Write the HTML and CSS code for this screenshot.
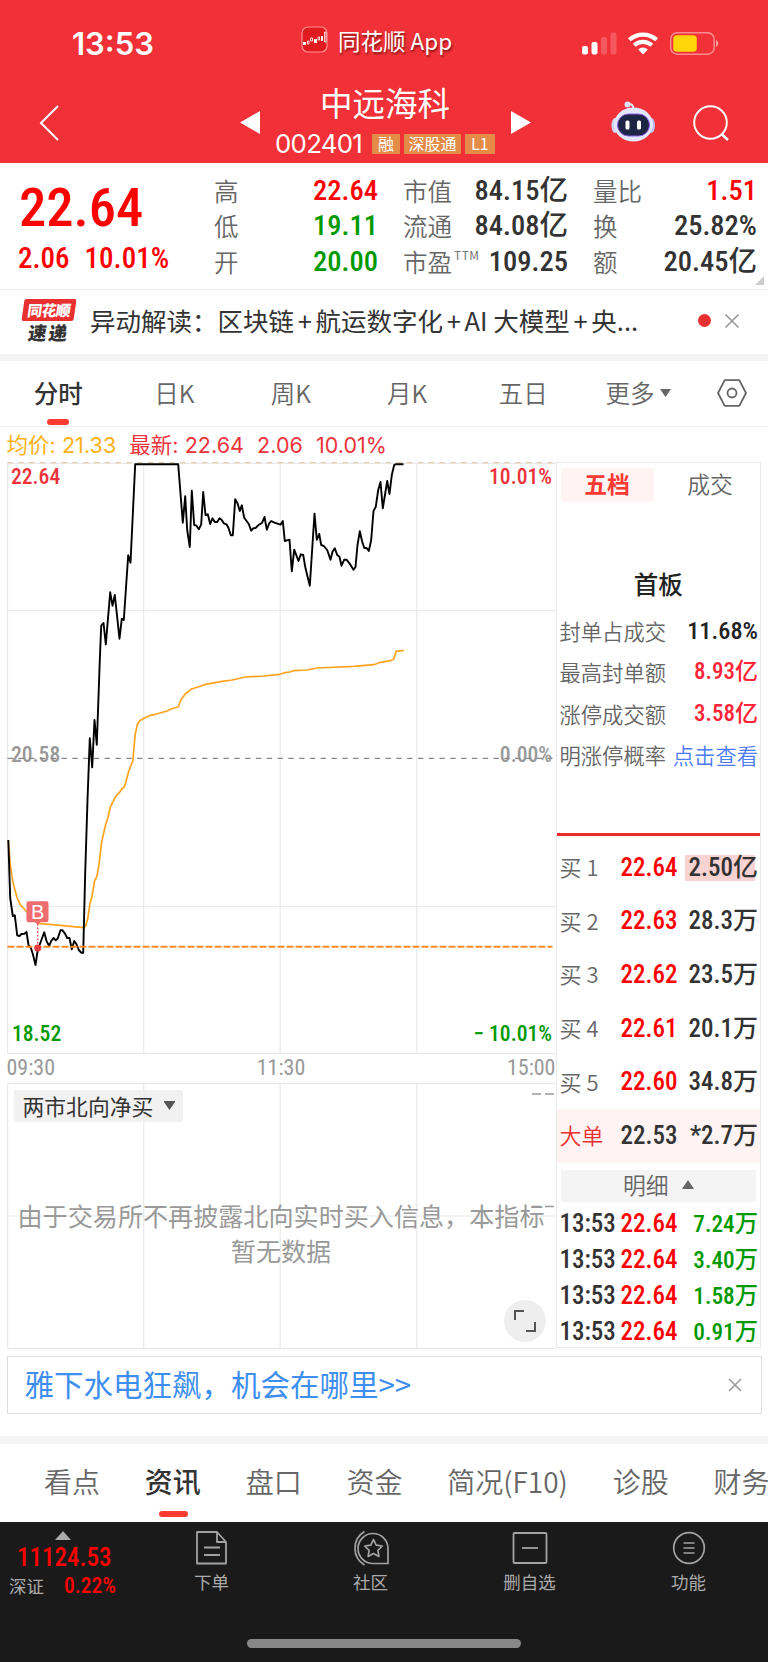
FILE: index.html
```html
<!DOCTYPE html>
<html lang="zh-CN">
  <head>
    <meta charset="UTF-8" />
    <meta name="viewport" content="width=device-width, initial-scale=1.0" />
    <title>中远海科 002401</title>
    <link rel="stylesheet" href="styles.css">
  </head>
  <body>
    <header class="header">
      <div class="status">
        <span class="clock">13:53</span>
        <div class="app-name">
          <svg class="app-icon" width="28" height="28" viewBox="0 0 28 28">
            <rect x="1" y="1" width="25" height="25" rx="6" fill="#e01c20" stroke="#ff8f8f" stroke-width="1.2" />
            <path d="M2 16h3v3H2zM13 13h3v4h-3zM20 10h2v5h-2z" fill="#fff" />
            <path d="M6.500 15h1.500v3h-1.500zM9.500 12h2v3h-2zM17 11h1.500v3H17zM23.500 6h1.500v10h-1.500z" fill="none" stroke="#fff" stroke-width=".8" />
          </svg>
          <span>同花顺 App</span>
        </div>
        <svg class="status-icons" width="138" height="26" viewBox="0 0 138 26">
          <g fill="#fff">
            <rect x="1" y="16" width="6" height="8.500" rx="2" />
            <rect x="10.500" y="12" width="6" height="12.500" rx="2" />
            <rect x="20" y="7" width="6" height="17.500" rx="2" opacity=".2" />
            <rect x="29.500" y="2.500" width="6" height="22" rx="2" opacity=".2" />
          </g>
          <g fill="none" stroke="#fff" stroke-width="4.200">
            <path d="M48.300 9.800a20.500 20.500 0 0 1 27.400 0" />
            <path d="M53.200 15.300a13 13 0 0 1 17.600 0" />
          </g>
          <path d="M62 24.500l-4.800-5a7 7 0 0 1 9.600 0z" fill="#fff" />
          <rect x="89.700" y="2.700" width="43.500" height="21.500" rx="6.500" fill="none" stroke="#fff" stroke-opacity=".45" stroke-width="1.500" />
          <rect x="92.300" y="5.300" width="23.500" height="16.400" rx="3.500" fill="#ffd60a" />
          <path d="M135 10c3 .8 3 6 0 7z" fill="#fff" fill-opacity=".5" />
        </svg>
      </div>
      <div class="nav">
        <svg class="back" width="22" height="38" viewBox="0 0 22 38">
          <path d="M20 2L3 19l17 17" fill="none" stroke="#fff" stroke-width="2" />
        </svg>
        <svg class="prev" width="20" height="23" viewBox="0 0 20 23"><path d="M20 0v23L0 11.500z" fill="#fff" /></svg>
        <div class="stock">
          <h1>中远海科</h1>
          <div class="code">
            <span class="code-num">002401</span>
            <span class="tag">融</span>
            <span class="tag">深股通</span>
            <span class="tag">L1</span>
          </div>
        </div>
        <svg class="next" width="20" height="23" viewBox="0 0 20 23"><path d="M0 0v23l20-11.500z" fill="#fff" /></svg>
        <svg class="robot" width="44" height="42" viewBox="0 0 44 42">
          <path d="M22.500 8c0-3-1-5-5-5.500" fill="none" stroke="#e6e9fa" stroke-width="2" />
          <circle cx="16.500" cy="3.500" r="3" fill="#dfe3f8" />
          <ellipse cx="4" cy="24.500" rx="3.500" ry="7.500" fill="#cfd5f5" />
          <ellipse cx="40.500" cy="24.500" rx="3.500" ry="7.500" fill="#b9bcf0" />
          <ellipse cx="22.500" cy="23.500" rx="19.500" ry="17" fill="#e3e7fb" />
          <rect x="6.500" y="13" width="32" height="22" rx="11" fill="#1d2544" stroke="#8d5bea" stroke-width="1" />
          <rect x="14.500" y="19.500" width="4" height="9" rx="1.500" fill="#fff" />
          <rect x="26" y="19.500" width="4" height="9" rx="1.500" fill="#fff" />
        </svg>
        <svg class="search" width="38" height="38" viewBox="0 0 38 38">
          <g fill="none" stroke="#fff" stroke-width="2">
            <circle cx="18.500" cy="18.500" r="16.300" />
            <path d="M29.500 30l6.500 6" stroke-width="2.500" />
          </g>
        </svg>
      </div>
    </header>

    <section class="quote">
      <div class="price">
        <div class="last din">22.64</div>
        <div class="change din"><span>2.06</span><span>10.01%</span></div>
      </div>
      <dl class="stats stats-a">
        <dt>高</dt><dd class="up">22.64</dd>
        <dt>低</dt><dd class="down">19.11</dd>
        <dt>开</dt><dd class="down">20.00</dd>
      </dl>
      <dl class="stats stats-b">
        <dt>市值</dt><dd>84.15亿</dd>
        <dt>流通</dt><dd>84.08亿</dd>
        <dt>市盈<sup>TTM</sup></dt><dd>109.25</dd>
      </dl>
      <dl class="stats stats-c">
        <dt>量比</dt><dd class="up">1.51</dd>
        <dt>换</dt><dd>25.82%</dd>
        <dt>额</dt><dd>20.45亿</dd>
      </dl>
      <svg class="corner" width="9" height="9" viewBox="0 0 9 9"><path d="M9 0v9H0z" fill="#ccc" /></svg>
    </section>

    <section class="news">
      <div class="news-logo">
        <span class="news-brand">同花顺</span>
        <span class="news-word">速递</span>
      </div>
      <p class="news-text">异动解读：区块链<i>+</i>航运数字化<i>+</i>AI 大模型<i>+</i>央...</p>
      <span class="dot"></span>
      <svg class="close" width="16" height="16" viewBox="0 0 16 16"><path d="M1.500 1.500l13 13M14.500 1.500l-13 13" stroke="#999" stroke-width="1.600" /></svg>
    </section>

    <nav class="periods">
      <a class="period active">分时</a>
      <a class="period">日K</a>
      <a class="period">周K</a>
      <a class="period">月K</a>
      <a class="period">五日</a>
      <a class="more">更多<svg width="11" height="8" viewBox="0 0 11 8"><path d="M0 0h11L5.500 8z" fill="#666" /></svg></a>
      <svg class="setting" width="32" height="28" viewBox="0 0 32 28">
        <g fill="none" stroke="#666" stroke-width="1.800">
          <path d="M8.700 1.200h14.600L30 14l-6.700 12.800H8.700L2 14z" stroke-linejoin="round" />
          <circle cx="16" cy="14" r="4.500" />
        </g>
      </svg>
    </nav>

    <main class="board">
      <div class="charts">
        <p class="legend"><span class="avg">均价: 21.33</span><span>最新: 22.64</span><span>2.06</span><span>10.01%</span></p>
        <svg class="minute" width="549" height="592" viewBox="6.500 462 549 592">
          <g fill="none" stroke="#e9e9e9" stroke-width="1.200">
            <path d="M7 463.400H555.500M7 610.500H555M7 906.500H555M7 1053.400H555" />
            <path d="M7 463V1054M143.200 463V1054M279.700 463V1054M416.300 463V1054" />
          </g>
          <path d="M7 462.600H552" stroke="#e2cdae" stroke-width="1.200" stroke-dasharray="5.400 5.400" />
          <g class="axis din">
            <text class="t-mid" x="10.500" y="762">20.58</text>
            <text class="t-mid" x="551.500" y="762" text-anchor="end">0.00%</text>
          </g>
          <path d="M7 758.400H552" stroke="#888" stroke-width="1.200" stroke-dasharray="5.400 5.400" />
          <path fill="none" stroke="#ffa31f" stroke-width="1.700" stroke-linejoin="round" d="M7.800 841L10 866.700 12.300 881.700 16.700 898.300 20 905 26.700 912.300 37.300 923.300 60 925.300 83.300 927.700 85.300 925.700 87.300 918.300 89.300 904.300 91.700 895.700 94 881 96.300 876.700 98.700 863.300 101 842.700 105 825 107.300 818.300 110 806.700 115.700 795.700 118.700 792.700 121.300 789 123.700 787 125.300 782.300 128.300 771 132.300 761 134.700 734.300 137 724 139.300 720.700 143.300 718.300 150 715.300 155 714.300 166.700 711 171 708.700 177.700 707 180.300 700 185 693.700 191 689 200 686.300 205 684.300 221.700 681.300 231.700 680 245 677 263.300 676 279.300 674.300 284.300 672.700 289.300 672 293.300 670.700 306.700 670 316.700 668 353.300 666.300 373.300 664.700 380 662.300 390 660.700 393.300 659 395.700 651.300 403.300 650.300" />
          <path fill="none" stroke="#000" stroke-width="1.900" stroke-linejoin="round" d="M7.800 840L9.700 898 12.300 916 14.300 915.300 16.700 935.300 19 936 21 934 24 933.700 26 932 28 945 30.500 948.300 32.300 954 35 965 37.300 949.500 40 942.500 43.700 932.300 46 941 48.700 946 50.700 941 53 938 55.300 940.300 57.300 938.300 60 930.300 62 930.300 64.300 933.300 66.700 938 69 938 71.300 949.300 73.700 941 76 944.300 78.300 950 80.700 952.700 82.700 952.700 84.700 873 87 800 89.300 738.300 91.700 767.300 94 720 96.300 744.700 99.300 660 100.700 625.700 103 623 105.300 644.300 109.700 592.300 112 605.700 114.300 595 119 638.700 121.300 618.700 123.300 620 127.700 555.300 130 562.700 134.700 464.300 177.700 464.300 182.300 522.700 184.700 496.300 186.700 530 189.300 547 191.300 490.700 193.700 525 196 525.700 198.300 529.300 200.700 524.300 202.700 492 205 515 207.300 514.300 209.700 524 212 518.300 214.300 522 216.700 522 219 518.300 221.300 520 223.300 523.300 226 524.300 228 528 230.300 535.300 232.300 535.300 234.700 499.300 237 503.300 239.300 511 241.300 505.300 243.700 517.700 248.300 524 250.700 530.700 252.700 528.300 255 528 257.700 525.300 261.700 522.700 264 517 266.300 529.700 268.700 523.300 270.700 521 273.300 522.300 280 524.700 282.300 521 284.300 541 289 539.700 291.300 571.300 293.700 549.700 298 561 300.300 554.300 302.700 555 305 568.300 309.300 585.700 314 513.700 316.300 539.700 318.700 534 320.700 545 323.300 546 326.700 550 330 559.700 332 551.700 334.300 548.300 336.700 555 339 556.700 341 565.700 343.700 559.700 346 559.700 349 563.300 353 569.700 355 567 357 545 359.300 531.300 361.700 541.700 363.700 547.700 366.300 548.300 368.300 551 370.700 540 373 511 375.300 506.700 377.700 490 380 482 382.300 508.300 386.700 481 389 494 391.300 475 393.700 465 395 464.300 403 464.300" />
          <path d="M7 946.700H552" stroke="#ff8a26" stroke-width="2" stroke-dasharray="7 2" />
          <path d="M37.200 924V944" stroke="#ee5a5f" stroke-width="1.500" stroke-dasharray="1.800 1.800" />
          <circle cx="37.200" cy="948" r="3.500" fill="#e83b40" />
          <path d="M28 901.300h18q2 0 2 2v17q0 2-2 2h-6l-2.800 2.500-2.800-2.500H28q-2 0-2-2v-17q0-2 2-2z" fill="#ee6b6e" />
          <text class="buy-mark" x="37.200" y="918.500" text-anchor="middle">B</text>
          <g class="axis din">
            <text class="t-up" x="10.500" y="483.500">22.64</text>
            <text class="t-up" x="551.500" y="483.500" text-anchor="end">10.01%</text>
            <text class="t-down" x="11.500" y="1041">18.52</text>
            <text class="t-down" x="551.500" y="1041" text-anchor="end">− 10.01%</text>
          </g>
        </svg>
        <div class="times din"><span>09:30</span><span>11:30</span><span>15:00</span></div>
        <div class="flow">
          <svg class="flow-grid" width="549" height="266" viewBox="0 0 549 266">
            <path d="M.5 .6H548.500M.5 133H548.500M.5 265.400H548.500M.6 0V266M136.700 0V266M273.200 0V266M409.800 0V266" fill="none" stroke="#e9e9e9" stroke-width="1.200" />
            <path d="M525 11h9M538 11h9M525 123.500h9M538 123.500h9" stroke="#999" stroke-width="1.500" />
          </svg>
          <span class="picker">两市北向净买<svg width="11" height="9" viewBox="0 0 11 9"><path d="M0 0h11v1L5.500 9 0 1z" fill="#555" /></svg></span>
          <p class="empty">由于交易所不再披露北向实时买入信息，本指标暂无数据</p>
          <span class="expand">
            <svg width="22" height="22" viewBox="0 0 22 22"><path d="M1 10V1h9M21 12v9h-9" fill="none" stroke="#555" stroke-width="2" /></svg>
          </span>
        </div>
      </div>

      <aside class="side">
        <div class="side-tabs"><a class="on">五档</a><a>成交</a></div>
        <h2>首板</h2>
        <ul class="facts">
          <li><span>封单占成交</span><b>11.68%</b></li>
          <li><span>最高封单额</span><b class="rise">8.93亿</b></li>
          <li><span>涨停成交额</span><b class="rise">3.58亿</b></li>
          <li><span>明涨停概率</span><a>点击查看</a></li>
        </ul>
        <ul class="bids">
          <li><span>买 1</span><b>22.64</b><em class="hot">2.50亿</em></li>
          <li><span>买 2</span><b>22.63</b><em>28.3万</em></li>
          <li><span>买 3</span><b>22.62</b><em>23.5万</em></li>
          <li><span>买 4</span><b>22.61</b><em>20.1万</em></li>
          <li><span>买 5</span><b>22.60</b><em>34.8万</em></li>
          <li class="big"><span>大单</span><b>22.53</b><em>*2.7万</em></li>
        </ul>
        <div class="detail">明细<svg width="12" height="9" viewBox="0 0 12 9"><path d="M6 0l6 9H0z" fill="#666" /></svg></div>
        <ul class="ticks">
          <li><span>13:53</span><b>22.64</b><em>7.24万</em></li>
          <li><span>13:53</span><b>22.64</b><em>3.40万</em></li>
          <li><span>13:53</span><b>22.64</b><em>1.58万</em></li>
          <li><span>13:53</span><b>22.64</b><em>0.91万</em></li>
        </ul>
      </aside>
    </main>

    <div class="promo">
      <a>雅下水电狂飙，机会在哪里&gt;&gt;</a>
      <svg width="14" height="14" viewBox="0 0 14 14"><path d="M1 1l12 12M13 1L1 13" stroke="#999" stroke-width="1.500" /></svg>
    </div>

    <nav class="sections">
      <a>看点</a>
      <a class="active">资讯</a>
      <a>盘口</a>
      <a>资金</a>
      <a>简况(F10)</a>
      <a>诊股</a>
      <a>财务</a>
    </nav>

    <footer class="toolbar">
      <div class="index">
        <svg width="16" height="9" viewBox="0 0 16 9"><path d="M8 0l8 9H0z" fill="#aaa" /></svg>
        <div class="index-value din">11124.53</div>
        <div class="index-row"><span>深证</span><b class="din">0.22%</b></div>
      </div>
      <div class="tool">
        <svg width="34" height="36" viewBox="0 0 34 36">
          <g fill="none" stroke="#a3a3a3" stroke-width="1.800" stroke-linejoin="round">
            <path d="M2 2h20l9 10v21.500H2zM22 2v10h9" />
            <path d="M9 17.500h16M9 25h16" />
          </g>
        </svg>
        <span>下单</span>
      </div>
      <div class="tool">
        <svg width="38" height="36" viewBox="0 0 38 36">
          <g fill="none" stroke="#a3a3a3" stroke-width="1.700" stroke-linejoin="round">
            <path d="M36 33.500H21.500A15 15 0 1 1 36 18.500z" />
            <path d="M12.500 1.500a19.500 19.500 0 0 0 0 33.500" />
            <path d="M21.500 9.500l2.700 5.600 6.100.9-4.400 4.300 1 6.100-5.400-2.900-5.400 2.900 1-6.100-4.400-4.300 6.100-.9z" />
          </g>
        </svg>
        <span>社区</span>
      </div>
      <div class="tool">
        <svg width="36" height="36" viewBox="0 0 36 36">
          <g fill="none" stroke="#a3a3a3" stroke-width="1.800">
            <rect x="1.500" y="3" width="33" height="30" rx="1" />
            <path d="M10 18h16" />
          </g>
        </svg>
        <span>删自选</span>
      </div>
      <div class="tool">
        <svg width="34" height="36" viewBox="0 0 34 36">
          <g fill="none" stroke="#a3a3a3" stroke-width="1.700">
            <circle cx="17" cy="18" r="15.300" />
            <path d="M11.500 13h11M11.500 18h11M11.500 23h11" />
          </g>
        </svg>
        <span>功能</span>
      </div>
    </footer>
    <div class="home"><span></span></div>
  </body>
</html>
```
FILE: styles.css
```css
* {
  margin: 0;
  padding: 0;
  box-sizing: border-box;
}
body {
  width: 768px;
  height: 1662px;
  overflow: hidden;
  background: #fff;
  color: #333;
  font-family: "Noto Sans CJK SC", sans-serif;
}
svg {
  display: block;
  flex: none;
}
ul {
  list-style: none;
}
em,
i {
  font-style: normal;
}
/* narrow digits used for every price */
.din,
dd,
.side b,
.side em,
.ticks span {
  font-family: Roboto, "Noto Sans CJK SC", sans-serif;
  font-stretch: 87%;
  font-weight: 500;
}
.up {
  color: #f00;
}
.down {
  color: #090;
}

/* header */
.header {
  height: 163px;
  background: #f23037;
  color: #fff;
}
.status {
  height: 86px;
  display: flex;
  align-items: center;
}
.clock {
  width: 301px;
  padding: 1px 0 0 72px;
  font: 600 31px/36px Inter, sans-serif;
}
.app-name {
  width: 280px;
  display: flex;
  align-items: center;
  gap: 9px;
  font-size: 22.500px;
  line-height: 28px;
  margin-top: -7px;
  text-shadow: 1px 2px 2px rgba(60, 0, 0, 0.6);
}
.nav {
  height: 77px;
  display: flex;
  align-items: flex-start;
}
.back {
  margin: 18px 0 0 38px;
}
.prev {
  margin: 25px 0 0 180px;
}
.stock {
  width: 251px;
  padding-right: 1px;
  text-align: center;
}
.stock h1 {
  font-size: 32.500px;
  font-weight: 400;
  line-height: 31px;
}
.code {
  display: flex;
  align-items: center;
  gap: 4px;
  height: 42px;
  margin-top: 6px;
  padding-left: 15px;
}
.code-num {
  width: 93px;
  text-align: left;
  font: 400 25.800px/30px Inter, sans-serif;
  letter-spacing: -0.700px;
}
.tag {
  height: 20px;
  padding: 0 6px;
  background: #e48b48;
  font-size: 16px;
  line-height: 19px;
}
.tag:nth-child(3) {
  padding: 0 4.500px;
}
.next {
  margin-top: 25px;
}
.robot {
  margin: 15px 0 0 80px;
}
.search {
  margin: 18px 0 0 37px;
}

/* quote */
.quote {
  position: relative;
  height: 127px;
  display: flex;
  border-bottom: 1px solid #eaeaea;
}
.price {
  width: 214px;
  padding: 10px 0 0 18px;
  color: #f00;
}
.last {
  padding-left: 1px;
  font-size: 54.500px;
  line-height: 68px;
}
.change {
  display: flex;
  gap: 15px;
  font-size: 29px;
  line-height: 34px;
}
.stats {
  display: grid;
  grid-template-columns: auto auto;
  justify-content: space-between;
  grid-auto-rows: 35.300px;
  align-items: center;
  padding-top: 10px;
  height: 120px;
  line-height: 35px;
}
.stats-a {
  width: 164px;
}
.stats-b {
  width: 165px;
  margin-left: 25px;
}
.stats-c {
  width: 164px;
  margin-left: 25px;
}
dt {
  color: #666;
  font-size: 24.500px;
  font-weight: 350;
  white-space: nowrap;
}
dt sup {
  position: relative;
  top: -12px;
  margin: 0 -30px 0 2px;
  font-size: 12px;
  line-height: 0;
  vertical-align: baseline;
  letter-spacing: 0.500px;
}
dd {
  font-size: 28.500px;
  text-align: right;
}
.corner {
  position: absolute;
  right: 4px;
  bottom: 4px;
}

/* news line */
.news {
  height: 71px;
  display: flex;
  align-items: center;
  padding: 0 28px 3px 23px;
  border-bottom: 7px solid #f4f4f4;
}
.news-logo {
  width: 52px;
  margin-right: 15px;
  font-weight: 900;
  text-align: center;
}
.news-brand,
.news-word {
  display: block;
  transform: skewX(-8deg);
}
.news-brand {
  height: 22px;
  background: #e93030;
  border-radius: 2px;
  color: #fff;
  font-size: 14.800px;
  line-height: 21px;
  letter-spacing: -0.500px;
}
.news-word {
  font-size: 18.500px;
  line-height: 22px;
  letter-spacing: 2px;
}
.news-text {
  width: 608px;
  padding-bottom: 2px;
  font-size: 25.500px;
  line-height: 36px;
  white-space: nowrap;
}
.news-text i {
  margin: 0 3.700px;
}
.dot {
  width: 13px;
  height: 13px;
  border-radius: 50%;
  background: #e93030;
}
.close {
  margin-left: 13px;
}

/* period tabs */
.periods {
  height: 66px;
  display: flex;
  align-items: center;
  padding-bottom: 2px;
  border-bottom: 1.500px solid #eee;
  color: #666;
  font-size: 24.500px;
  font-weight: 350;
}
.period {
  position: relative;
  width: 116.300px;
  text-align: center;
}
.active {
  color: #333;
  font-weight: 500;
}
.period.active::after {
  content: "";
  position: absolute;
  left: 47px;
  bottom: -15px;
  width: 22px;
  height: 6px;
  border-radius: 3px;
  background: #fd3b33;
}
.more {
  display: flex;
  align-items: center;
  gap: 6px;
  margin-left: 24px;
}
.setting {
  margin-left: 45px;
}

/* charts and order book */
.board {
  display: flex;
  height: 922px;
  padding-left: 6.500px;
}
.charts {
  width: 549px;
}
.legend {
  height: 35px;
  display: flex;
  gap: 13px;
  font: 400 21.500px/36px Inter, "Noto Sans CJK SC", sans-serif;
  letter-spacing: 0.050px;
  color: #eb333b;
}
.avg {
  color: #fcb116;
}
.axis {
  font-size: 21.600px;
}
.t-up {
  fill: #eb333b;
}
.t-mid {
  fill: #999;
}
.t-down {
  fill: #090;
}
.buy-mark {
  font: 500 20px "Liberation Sans", sans-serif;
  fill: #fff;
}
.times {
  height: 29px;
  display: flex;
  justify-content: space-between;
  font-size: 22px;
  font-weight: 400;
  line-height: 28px;
  color: #999;
}
.flow {
  position: relative;
  height: 266px;
}
.flow-grid,
.picker,
.expand {
  position: absolute;
}
.picker {
  left: 7px;
  top: 7px;
  height: 32px;
  width: 169px;
  display: flex;
  align-items: center;
  gap: 11px;
  padding: 0 0 2px 9px;
  border-radius: 3px;
  background: rgba(238, 238, 238, 0.850);
  font-size: 21.800px;
}
.empty {
  position: relative;
  padding: 115px 5px 0;
  text-align: center;
  font-size: 25.100px;
  line-height: 35px;
  color: #999;
}
.expand {
  left: 497px;
  top: 217px;
  width: 42px;
  height: 42px;
  display: flex;
  align-items: center;
  justify-content: center;
  border-radius: 50%;
  background: #eee;
}
.side {
  width: 205.500px;
  height: 886px;
  margin-top: 35px;
  border: 1px solid #eaeaea;
}
.side-tabs {
  display: flex;
  height: 40px;
  padding: 5px 0 0 4px;
  font-size: 22.800px;
  font-weight: 350;
  line-height: 32px;
  text-align: center;
  color: #666;
}
.side-tabs a {
  flex: none;
  width: 113px;
  height: 34px;
}
.side-tabs .on {
  width: 93px;
  border-radius: 4px;
  background: #fff3f3;
  color: #fb3a31;
  font-weight: 700;
}
.side h2 {
  margin-top: 63px;
  font-size: 24.500px;
  font-weight: 500;
  line-height: 36px;
  text-align: center;
  color: #222;
}
.facts {
  height: 234px;
  padding: 8px 2px 0 3px;
  border-bottom: 3px solid #e62e2e;
}
.facts li {
  display: flex;
  justify-content: space-between;
  height: 41.300px;
  font-size: 21.300px;
  line-height: 41px;
  font-weight: 350;
  color: #666;
}
.facts b {
  font-size: 24.300px;
  color: #222;
}
.facts .rise {
  font-size: 23px;
  color: #ff2436;
}
.facts a {
  color: #4c7bf4;
}
.bids {
  padding-top: 5px;
}
.bids li,
.ticks li {
  display: grid;
  grid-template-columns: 61px 1fr auto;
  align-items: center;
  height: 53.600px;
  padding: 0 2px 0 3px;
}
.bids span {
  padding-bottom: 3px;
  color: #666;
  font-size: 22px;
  font-weight: 350;
}
.bids b,
.bids em,
.ticks li > * {
  font-size: 25px;
  line-height: 26px;
}
.bids b,
.ticks b {
  color: #f00;
}
.hot {
  padding-left: 4px;
  background: linear-gradient(90deg, #f9d2d2 96%, transparent 96%);
}
.bids .big {
  background: #fff3f3;
}
.bids .big span {
  color: #e93030;
}
.bids .big b {
  color: #333;
}
.detail {
  display: flex;
  align-items: center;
  justify-content: center;
  gap: 13px;
  height: 32px;
  margin: 7px 4px 5px;
  padding-bottom: 2px;
  background: #f4f4f4;
  color: #666;
  font-size: 22.800px;
  font-weight: 350;
}
.ticks li {
  height: 35.800px;
}
.ticks li em {
  font-size: 23.300px;
  color: #090;
}

/* promo */
.promo {
  display: flex;
  align-items: center;
  justify-content: space-between;
  width: 755px;
  height: 58px;
  margin: 7px 0 22px 6.500px;
  padding: 0 19px 0 17px;
  border: 1px solid #ddd;
}
.promo a {
  padding-bottom: 4px;
  font-size: 29.500px;
  line-height: 52px;
  color: #3e8eef;
}

/* section tabs */
.sections {
  display: flex;
  gap: 44.800px;
  height: 86px;
  padding-left: 44px;
  border-top: 8px solid #f4f4f4;
  font-size: 28px;
  font-weight: 350;
  line-height: 74px;
  white-space: nowrap;
  color: #666;
}
.sections a {
  position: relative;
}
.sections .active {
  font-weight: 500;
}
.sections .active::after {
  content: "";
  position: absolute;
  left: 14px;
  top: 67px;
  width: 29px;
  height: 6px;
  border-radius: 3px;
  background: #fd3b33;
}

/* bottom bar */
.toolbar {
  display: flex;
  height: 90px;
  background: #1a1a1a;
  color: #aaa;
  font-size: 17.500px;
}
.index {
  width: 132px;
  padding-top: 9px;
}
.index > svg {
  margin-left: 55px;
}
.index-value {
  padding: 1px 0 0 17px;
  font-size: 25px;
  line-height: 34px;
  color: #f00;
}
.index-row {
  display: flex;
  gap: 20px;
  padding-left: 9px;
  line-height: 22px;
}
.index-row b {
  font-size: 21.500px;
  color: #f00;
}
.tool {
  width: 159px;
  display: flex;
  flex-direction: column;
  align-items: center;
  padding-top: 8px;
}
.tool span {
  margin-top: 3px;
}
.home {
  height: 51px;
  padding-top: 27px;
  background: #1a1a1a;
}
.home span {
  display: block;
  width: 274px;
  height: 9px;
  margin-left: 247px;
  border-radius: 5px;
  background: #888;
}
```
